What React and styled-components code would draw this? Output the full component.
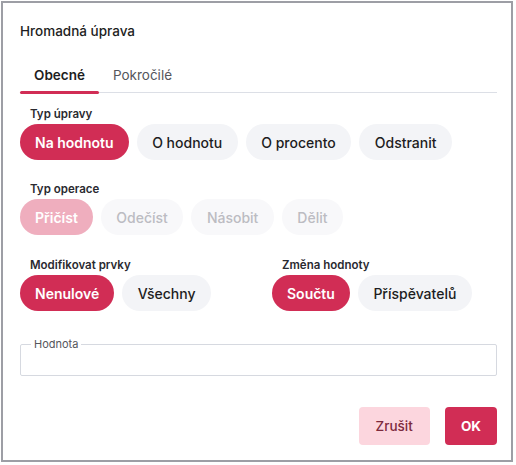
import { useState } from "react";
import styled, { createGlobalStyle, css } from "styled-components";

const GlobalStyle = createGlobalStyle`
  body {
    margin: 0;
    background: #ffffff;
    font-family: Inter, "Noto Sans", sans-serif;
    color: #222;
  }
`;

const RED = "#d12d55";

const Dialog = styled.div`
  box-sizing: border-box;
  margin: 1px;
  width: 512px;
  height: 461px;
  border: 2px solid #9d9ea5;
  background: #fff;
  padding: 18px 14px 0 17px;
  display: flex;
  flex-direction: column;
`;

const Title = styled.h2`
  margin: 0;
  font-size: 13.5px;
  line-height: 20px;
  font-weight: 500;
  color: #1d1d22;
`;

const TabBar = styled.div`
  margin-top: 17px;
  display: flex;
  border-bottom: 1px solid #dcdfe6;
`;

const Tab = styled.button`
  position: relative;
  height: 34px;
  padding: 0 14px;
  border: 0;
  background: none;
  font-family: inherit;
  font-size: 13.5px;
  color: ${(p) => (p.$active ? "#1d1d22" : "#55565c")};
  font-weight: ${(p) => (p.$active ? 600 : 400)};
  cursor: pointer;

  ${(p) =>
    p.$active &&
    css`
      &::after {
        content: "";
        position: absolute;
        left: 0;
        right: 0;
        bottom: -2px;
        height: 3px;
        border-radius: 2px;
        background: ${RED};
      }
    `}
`;

const Section = styled.div`
  margin-top: ${(p) => p.$top}px;
`;

const Label = styled.div`
  padding-left: 10px;
  font-size: 11.5px;
  line-height: 14px;
  font-weight: 600;
  color: #2a2a30;
  margin-bottom: 3px;
`;

const Pills = styled.div`
  display: flex;
  gap: 8px;
`;

const Pill = styled.button`
  height: 36px;
  padding: 0 ${(p) => (p.$active ? 15 : 15.5)}px;
  border: 0;
  border-radius: 18px;
  font-family: inherit;
  font-size: 14px;
  cursor: pointer;
  background: ${(p) =>
    p.$disabled ? (p.$active ? "#efaebe" : "#f8f8fa") : p.$active ? RED : "#f3f4f7"};
  color: ${(p) => (p.$active ? "#fff" : p.$disabled ? "#bcbcc2" : "#1d1d22")};
  font-weight: ${(p) => (p.$active ? 600 : 500)};
`;

const Columns = styled.div`
  display: grid;
  grid-template-columns: 252px 1fr;
  margin-top: 23px;
`;

const Field = styled.fieldset`
  margin: 27px 0 0;
  padding: 0 10px;
  height: 38px;
  box-sizing: border-box;
  border: 1px solid #d6d9e0;
  border-radius: 2px;
`;

const Legend = styled.legend`
  padding: 0 3px;
  margin-left: 0;
  font-size: 11px;
  line-height: 12px;
  color: #55565c;
`;

const Footer = styled.div`
  margin-top: 31px;
  display: flex;
  justify-content: flex-end;
  gap: 15px;
`;

const Action = styled.button`
  height: 38px;
  padding: 0 ${(p) => (p.$primary ? 16 : 17)}px;
  border: 0;
  border-radius: 4px;
  font-family: inherit;
  font-size: 13.5px;
  font-weight: ${(p) => (p.$primary ? 700 : 500)};
  background: ${(p) => (p.$primary ? RED : "#fcd6de")};
  color: ${(p) => (p.$primary ? "#fff" : "#7c2a3d")};
  cursor: pointer;
`;

function PillGroup({ items, active, disabled }) {
  return (
    <Pills>
      {items.map((t) => (
        <Pill key={t} $active={t === active} $disabled={disabled}>
          {t}
        </Pill>
      ))}
    </Pills>
  );
}

export default function App() {
  const [tab, setTab] = useState("Obecné");
  return (
    <>
      <GlobalStyle />
      <Dialog>
        <Title>Hromadná úprava</Title>
        <TabBar>
          {["Obecné", "Pokročilé"].map((t) => (
            <Tab key={t} $active={t === tab} onClick={() => setTab(t)}>
              {t}
            </Tab>
          ))}
        </TabBar>

        <Section $top={14}>
          <Label>Typ úpravy</Label>
          <PillGroup
            items={["Na hodnotu", "O hodnotu", "O procento", "Odstranit"]}
            active="Na hodnotu"
          />
        </Section>

        <Section $top={22}>
          <Label>Typ operace</Label>
          <PillGroup
            items={["Přičíst", "Odečíst", "Násobit", "Dělit"]}
            active="Přičíst"
            disabled
          />
        </Section>

        <Columns>
          <div>
            <Label>Modifikovat prvky</Label>
            <PillGroup items={["Nenulové", "Všechny"]} active="Nenulové" />
          </div>
          <div>
            <Label>Změna hodnoty</Label>
            <PillGroup items={["Součtu", "Příspěvatelů"]} active="Součtu" />
          </div>
        </Columns>

        <Field>
          <Legend>Hodnota</Legend>
        </Field>

        <Footer>
          <Action>Zrušit</Action>
          <Action $primary>OK</Action>
        </Footer>
      </Dialog>
    </>
  );
}
